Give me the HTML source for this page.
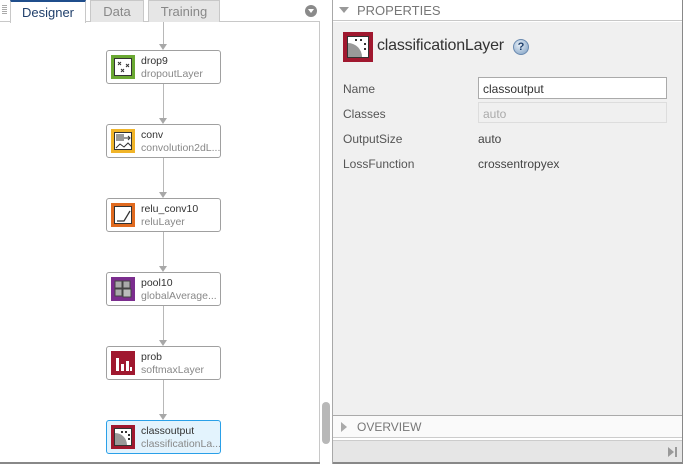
<!DOCTYPE html>
<html><head><style>
*{margin:0;padding:0;box-sizing:border-box}
body{width:683px;height:464px;position:relative;overflow:hidden;background:#fff;font-family:"Liberation Sans",sans-serif;font-size:12px;color:#333}
.abs{position:absolute}
.tab{position:absolute;top:0;height:22px;border:1px solid #c8c8c8;border-bottom:none;background:#e6e6e6;color:#888;font-size:13px;padding:3px 0 0 0;text-align:center}
.node{position:absolute;left:106px;width:115px;height:34px;border:1px solid #a0a0a0;border-radius:3px;background:#fff}
.node .ic{position:absolute;left:4px;top:4px;width:24px;height:24px}
.node .t1{position:absolute;left:34px;top:4px;font-size:10.5px;color:#333}
.node .t2{position:absolute;left:34px;top:17px;font-size:10.5px;color:#888}
.vl{position:absolute;left:163px;width:1px;background:#b8b8b8}
.arr{position:absolute;left:159px;width:0;height:0;border-left:4px solid transparent;border-right:4px solid transparent;border-top:6px solid #a8a8a8}
.lbl{position:absolute;left:343px;font-size:12px;color:#555}
</style></head><body>
<div class="abs" style="left:0;top:21px;width:319px;height:1px;background:#c8c8c8"></div>
<div class="abs" style="left:2px;top:5px;width:5px;height:10px;background:repeating-linear-gradient(#aaa 0 1px,transparent 1px 2px)"></div>
<div class="tab" style="left:10px;width:76px;background:#fff;border-top:2px solid #1f4e8c;color:#1f3f6b;height:23px">Designer</div>
<div class="tab" style="left:90px;width:54px">Data</div>
<div class="tab" style="left:148px;width:72px">Training</div>
<div class="abs" style="left:305px;top:5px;width:12px;height:12px;border-radius:50%;background:#8a8a8a"><div style="position:absolute;left:3px;top:4px;border-left:3px solid transparent;border-right:3px solid transparent;border-top:4px solid #fff"></div></div>
<div class="abs" style="left:319px;top:21px;width:1px;height:443px;background:#c8c8c8"></div>
<div class="abs" style="left:332px;top:0;width:1px;height:464px;background:#a8a8a8"></div>
<div class="abs" style="left:322px;top:402px;width:8px;height:42px;border-radius:4px;background:#b8b8b8"></div>
<div class="abs" style="left:0;top:462px;width:320px;height:2px;background:#888"></div>
<div class="vl" style="top:22px;height:24px"></div><div class="arr" style="top:44px"></div>
<div class="vl" style="top:84px;height:36px"></div><div class="arr" style="top:118px"></div>
<div class="vl" style="top:158px;height:36px"></div><div class="arr" style="top:192px"></div>
<div class="vl" style="top:232px;height:36px"></div><div class="arr" style="top:266px"></div>
<div class="vl" style="top:306px;height:36px"></div><div class="arr" style="top:340px"></div>
<div class="vl" style="top:380px;height:36px"></div><div class="arr" style="top:414px"></div>

<div class="node" style="top:50px"><div class="ic" style="background:#6aa832;padding:3px"><svg width="18" height="18" style="background:#fff;border:1px solid #333"><path d="M3 3l3 3M6 3l-3 3M11 5l3 3M14 5l-3 3M6 10l3 3M9 10l-3 3" stroke="#333" stroke-width="1"/></svg></div><div class="t1">drop9</div><div class="t2">dropoutLayer</div></div>
<div class="node" style="top:124px"><div class="ic" style="background:#f0b429;padding:3px"><svg width="18" height="18" style="background:#fff;border:1px solid #333"><rect x="1" y="1" width="8" height="7" fill="#999"/><path d="M9 5h6M13 3l2 2-2 2M1 15l4-4 4 3 4-4 4 4" stroke="#333" fill="none"/></svg></div><div class="t1">conv</div><div class="t2">convolution2dL...</div></div>
<div class="node" style="top:198px"><div class="ic" style="background:#e06a1f;padding:3px"><svg width="18" height="18" style="background:#fff;border:1px solid #333"><path d="M2 14 L9 14 L15 4" stroke="#333" fill="none" stroke-width="1.3"/></svg></div><div class="t1">relu_conv10</div><div class="t2">reluLayer</div></div>
<div class="node" style="top:272px"><div class="ic" style="background:#7b2d8e;padding:3px"><svg width="18" height="18"><rect x="1" y="1" width="7" height="7" fill="#aaa" stroke="#444"/><rect x="9" y="1" width="7" height="7" fill="#aaa" stroke="#444"/><rect x="1" y="9" width="7" height="7" fill="#aaa" stroke="#444"/><rect x="9" y="9" width="8" height="8" fill="#bbb" stroke="#444"/></svg></div><div class="t1">pool10</div><div class="t2">globalAverage...</div></div>
<div class="node" style="top:346px"><div class="ic" style="background:#a0182f;padding:3px"><svg width="18" height="18"><rect x="2" y="4" width="3" height="13" fill="#fff"/><rect x="7" y="10" width="3" height="7" fill="#fff"/><rect x="12" y="7" width="3" height="10" fill="#fff"/><rect x="16" y="13" width="2" height="4" fill="#fff"/></svg></div><div class="t1">prob</div><div class="t2">softmaxLayer</div></div>
<div class="node" style="top:420px;border-color:#2aa0e8;background:#e3f3fd"><div class="ic" style="background:#a0182f;padding:3px"><svg width="18" height="18" style="background:#fff;border:1px solid #333"><path d="M0 4A12 12 0 0 1 12 16H0Z" fill="#999"/><g fill="#333"><rect x="6" y="2" width="2" height="2"/><rect x="10" y="2" width="2" height="2"/><rect x="13" y="5" width="2" height="2"/><rect x="13" y="9" width="2" height="2"/></g></svg></div><div class="t1">classoutput</div><div class="t2">classificationLa...</div></div>

<div class="abs" style="left:333px;top:0;width:350px;height:21px;background:#fff;border-bottom:1px solid #c8c8c8"></div>
<div class="abs" style="left:339px;top:7px;border-left:5px solid transparent;border-right:5px solid transparent;border-top:6px solid #999"></div>
<div class="abs" style="left:357px;top:3px;font-size:13px;color:#777">PROPERTIES</div>
<div class="abs" style="left:333px;top:22px;width:350px;height:394px;background:#f0f0f0"></div>
<div class="abs" style="left:343px;top:32px;width:30px;height:30px;background:#a0182f;padding:4px"><svg width="22" height="22" style="background:#fff;border:1px solid #333"><path d="M0 6A14 14 0 0 1 14 20H0Z" fill="#999"/><g fill="#333"><rect x="7" y="2" width="2" height="2"/><rect x="12" y="2" width="2" height="2"/><rect x="16" y="6" width="2" height="2"/><rect x="16" y="11" width="2" height="2"/></g></svg></div>
<div class="abs" style="left:377px;top:37px;font-size:16px;color:#333;letter-spacing:-0.2px">classificationLayer</div>
<div class="abs" style="left:513px;top:39px;width:16px;height:16px;border-radius:50%;background:radial-gradient(circle at 40% 35%,#e8f0f8,#7a9cc0);border:1px solid #6a8ab0;font-size:11px;font-weight:bold;text-align:center;line-height:14px;color:#1d3e6a">?</div>
<div class="lbl" style="top:82px">Name</div>
<div class="lbl" style="top:107px">Classes</div>
<div class="lbl" style="top:132px">OutputSize</div>
<div class="lbl" style="top:157px">LossFunction</div>
<div class="abs" style="left:478px;top:77px;width:189px;height:22px;background:#fff;border:1px solid #aaa;padding:4px 0 0 4px;font-size:12px;color:#333">classoutput</div>
<div class="abs" style="left:478px;top:102px;width:189px;height:21px;background:#f0f0f0;border:1px solid #ddd;padding:4px 0 0 4px;font-size:12px;color:#aaa">auto</div>
<div class="abs" style="left:478px;top:132px;color:#444">auto</div>
<div class="abs" style="left:478px;top:157px;color:#444">crossentropyex</div>
<div class="abs" style="left:333px;top:415px;width:350px;height:1px;background:#aaa"></div>
<div class="abs" style="left:333px;top:416px;width:350px;height:22px;background:#fafafa;border-bottom:1px solid #ccc"></div>
<div class="abs" style="left:341px;top:422px;border-top:5px solid transparent;border-bottom:5px solid transparent;border-left:6px solid #aaa"></div>
<div class="abs" style="left:357px;top:420px;font-size:12px;color:#777">OVERVIEW</div>
<div class="abs" style="left:333px;top:440px;width:350px;height:24px;background:#e6e6e6;border-top:1px solid #ccc"></div>
<div class="abs" style="left:668px;top:447px;border-top:5px solid transparent;border-bottom:5px solid transparent;border-left:6px solid #999"></div>
<div class="abs" style="left:675px;top:447px;width:2px;height:10px;background:#999"></div>
<div class="abs" style="left:682px;top:0;width:1px;height:464px;background:#888"></div>
<div class="abs" style="left:333px;top:462px;width:350px;height:2px;background:#888"></div>
</body></html>
